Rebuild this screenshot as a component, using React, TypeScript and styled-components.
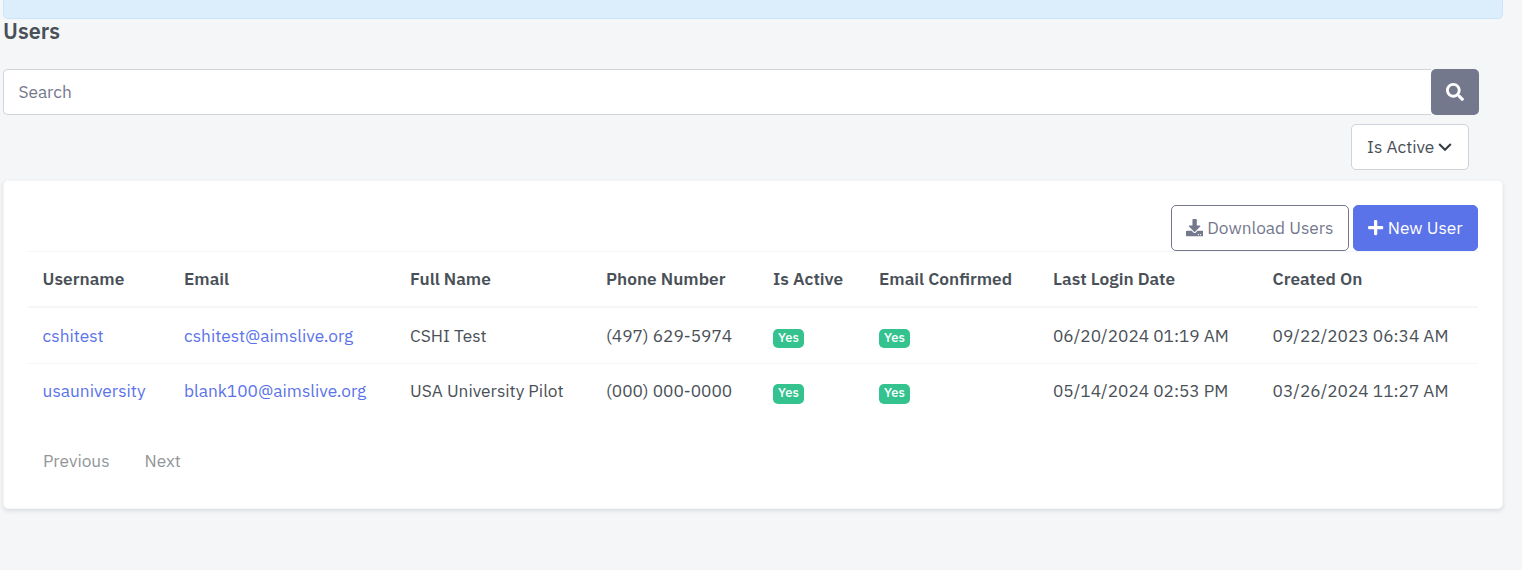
import React from "react";
import styled, { createGlobalStyle } from "styled-components";
import { FaSearch, FaDownload, FaPlus } from "react-icons/fa";

const GlobalStyle = createGlobalStyle`
  *, *::before, *::after { box-sizing: border-box; }
  html, body { margin: 0; height: 100%; background: #f5f6f8; }
  body {
    overflow: hidden;
    font-family: "IBM Plex Sans", Roboto, sans-serif;
    font-size: 17.28px;
    line-height: 26px;
    color: #495057;
  }
`;

const Page = styled.main`
  padding: 0 19px 0 3px;
`;

const Notice = styled.div`
  height: 19px;
  background: #dcedfc;
  border: 1px solid #cbe4fa;
  border-top: 0;
  border-radius: 0 0 5px 5px;
`;

const Title = styled.h1`
  margin: 0;
  height: 50px;
  font-size: 21.6px;
  line-height: 25px;
  font-weight: 600;
`;

const SearchBar = styled.form`
  display: flex;
  width: 1476px;
  height: 46px;
`;

const SearchInput = styled.div`
  flex: 1;
  padding: 9px 14.4px;
  background: #fff;
  border: 1px solid #ced4da;
  border-right: 0;
  border-radius: 5px 0 0 5px;
  color: #74788d;
`;

const SearchButton = styled.button`
  display: flex;
  align-items: center;
  justify-content: center;
  width: 48px;
  padding: 0;
  border: 0;
  border-radius: 5px;
  background: #74788d;
  color: #fff;
  font-size: 18px;
`;

const FilterRow = styled.div`
  display: flex;
  justify-content: flex-end;
  padding: 9px 34px 10px 0;
`;

const FilterButton = styled.button`
  display: flex;
  align-items: center;
  gap: 3.5px;
  width: 118px;
  height: 46px;
  padding: 0 0 0 15px;
  border: 1px solid #ced4da;
  border-radius: 5px;
  background: #fff;
  color: #495057;
  font: inherit;
`;

const Card = styled.section`
  height: 329px;
  padding: 24px 24px 0;
  background: #fff;
  border: 1px solid #f6f6f6;
  border-radius: 5px;
  box-shadow: 0 2px 4px rgba(15, 34, 58, 0.12);
`;

const Actions = styled.div`
  display: flex;
  justify-content: flex-end;
  gap: 4px;
`;

const ActionButton = styled.button<{ $primary?: boolean; $width: number }>`
  display: flex;
  align-items: center;
  gap: ${(p) => (p.$primary ? 3.5 : 4)}px;
  width: ${(p) => p.$width}px;
  height: 46px;
  padding: 0 0 0 ${(p) => (p.$primary ? 13 : 14)}px;
  border: 1px solid ${(p) => (p.$primary ? "#5b73e8" : "#74788d")};
  border-radius: 5px;
  background: ${(p) => (p.$primary ? "#5b73e8" : "#fff")};
  color: ${(p) => (p.$primary ? "#fff" : "#74788d")};
  font: inherit;
  white-space: nowrap;
`;

const Table = styled.table`
  width: 1450px;
  table-layout: fixed;
  border-collapse: separate;
  border-spacing: 0;
`;

const HeadCell = styled.th`
  height: 57px;
  padding: 0 0 0 15px;
  border-top: 1px solid #f5f6f8;
  border-bottom: 2px solid #f5f6f8;
  text-align: left;
  font-weight: 600;
  white-space: nowrap;

  &:first-child, &:last-child { padding-left: 14.6px; }
`;

const Cell = styled.td<{ $last?: boolean }>`
  height: ${(p) => (p.$last ? 53 : 56)}px;
  padding: 0 0 0 15px;
  border-bottom: ${(p) => (p.$last ? "0" : "1px solid #f5f6f8")};
  white-space: nowrap;

  &:first-child, &:last-child { padding-left: 14.6px; }
`;

const Link = styled.a`
  color: #5b73e8;
  text-decoration: none;
`;

const Badge = styled.span<{ $tall?: boolean }>`
  display: block;
  width: 31px;
  height: ${(p) => (p.$tall ? 20 : 19)}px;
  margin-top: ${(p) => (p.$tall ? 7 : 5)}px;
  border-radius: 5px;
  background: #34c38f;
  color: #fff;
  font-size: 12.96px;
  line-height: 18px;
  font-weight: 500;
  text-align: center;
`;

const Pager = styled.nav`
  display: flex;
  gap: 35px;
  padding: 31px 0 0 15px;
  color: #939699;
`;

const columns = [
  { label: "Username", width: 141 },
  { label: "Email", width: 226 },
  { label: "Full Name", width: 196 },
  { label: "Phone Number", width: 167 },
  { label: "Is Active", width: 106 },
  { label: "Email Confirmed", width: 174 },
  { label: "Last Login Date", width: 220 },
  { label: "Created On", width: 220 },
];

const users = [
  {
    username: "cshitest",
    email: "cshitest@aimslive.org",
    name: "CSHI Test",
    phone: "(497) 629-5974",
    login: "06/20/2024 01:19 AM",
    created: "09/22/2023 06:34 AM",
  },
  {
    username: "usauniversity",
    email: "blank100@aimslive.org",
    name: "USA University Pilot",
    phone: "(000) 000-0000",
    login: "05/14/2024 02:53 PM",
    created: "03/26/2024 11:27 AM",
  },
];

export default function App() {
  return (
    <>
      <GlobalStyle />
      <Page>
        <Notice />
        <Title>Users</Title>
        <SearchBar>
          <SearchInput>Search</SearchInput>
          <SearchButton type="button" aria-label="Search">
            <FaSearch />
          </SearchButton>
        </SearchBar>
        <FilterRow>
          <FilterButton type="button">
            <span>Is Active</span>
            <svg width="14" height="14" viewBox="0 0 14 14" fill="none" stroke="#343a40" strokeWidth="2">
              <path d="M1.2 4 L7 9.8 L12.8 4" />
            </svg>
          </FilterButton>
        </FilterRow>
        <Card>
          <Actions>
            <ActionButton type="button" $width={178}>
              <FaDownload />
              <span>Download Users</span>
            </ActionButton>
            <ActionButton type="button" $primary $width={125}>
              <FaPlus />
              <span>New User</span>
            </ActionButton>
          </Actions>
          <Table>
            <colgroup>
              {columns.map((c) => (
                <col key={c.label} width={c.width} />
              ))}
            </colgroup>
            <thead>
              <tr>
                {columns.map((c) => (
                  <HeadCell key={c.label}>{c.label}</HeadCell>
                ))}
              </tr>
            </thead>
            <tbody>
              {users.map((u, i) => {
                const last = i === users.length - 1;
                return (
                  <tr key={u.username}>
                    <Cell $last={last}><Link>{u.username}</Link></Cell>
                    <Cell $last={last}><Link>{u.email}</Link></Cell>
                    <Cell $last={last}>{u.name}</Cell>
                    <Cell $last={last}>{u.phone}</Cell>
                    <Cell $last={last}><Badge $tall={last}>Yes</Badge></Cell>
                    <Cell $last={last}><Badge $tall={last}>Yes</Badge></Cell>
                    <Cell $last={last}>{u.login}</Cell>
                    <Cell $last={last}>{u.created}</Cell>
                  </tr>
                );
              })}
            </tbody>
          </Table>
          <Pager>
            <span>Previous</span>
            <span>Next</span>
          </Pager>
        </Card>
      </Page>
    </>
  );
}
